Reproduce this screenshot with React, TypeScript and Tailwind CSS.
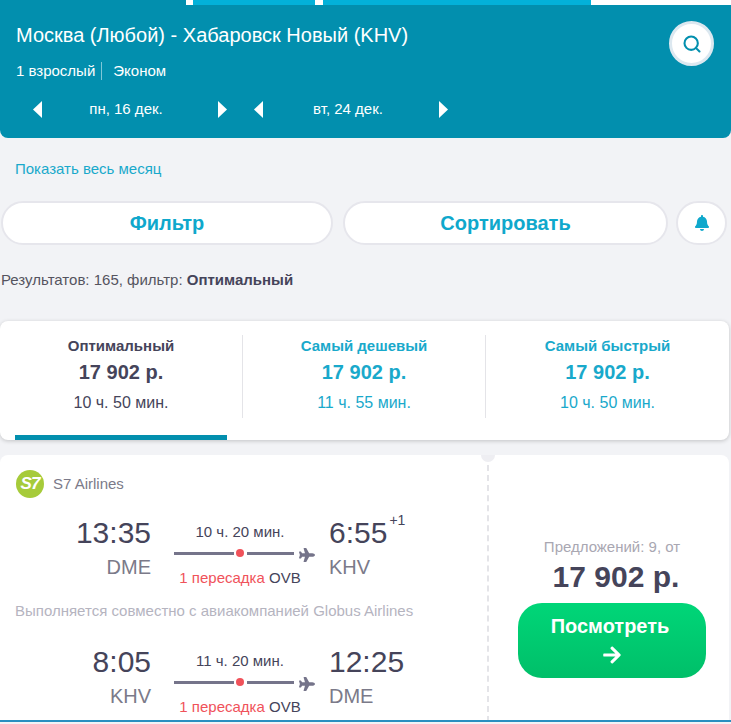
import { Search } from 'lucide-react';
import { FaArrowRight, FaBell, FaPlane } from 'react-icons/fa';

const Caret = ({ dir }: { dir: 'left' | 'right' }) => (
  <svg width="9" height="17" viewBox="0 0 9 17" className="text-white" fill="currentColor">
    {dir === 'left' ? <polygon points="9,0 9,17 0,8.5" /> : <polygon points="0,0 0,17 9,8.5" />}
  </svg>
);

const DatePicker = ({ label, shift }: { label: string; shift: string }) => (
  <div className="flex w-[194px] items-center justify-between text-[15px] text-white">
    <Caret dir="left" />
    <span className={shift}>{label}</span>
    <Caret dir="right" />
  </div>
);

const tabs = [
  { title: 'Оптимальный', price: '17 902 р.', time: '10 ч. 50 мин.', active: true },
  { title: 'Самый дешевый', price: '17 902 р.', time: '11 ч. 55 мин.', active: false },
  { title: 'Самый быстрый', price: '17 902 р.', time: '10 ч. 50 мин.', active: false },
];

const FlightRow = ({
  from,
  fromCode,
  to,
  toCode,
  duration,
  plus,
}: {
  from: string;
  fromCode: string;
  to: string;
  toCode: string;
  duration: string;
  plus?: string;
}) => (
  <div className="flex h-[83px]">
    <div className="w-[151px] shrink-0 text-right">
      <div className="text-[30px] leading-[36px] text-[#45445a]">{from}</div>
      <div className="mt-[4px] text-[20px] leading-[24px] text-[#7b7a89]">{fromCode}</div>
    </div>
    <div className="ml-[23px] w-[141px] shrink-0">
      <div className="mt-[8px] w-[132px] text-center text-[15px] leading-[18px] text-[#45445a]">{duration}</div>
      <div className="mt-[3px] flex h-[18px] items-center">
        <div className="relative h-[3px] w-[120px] bg-[#75748a]">
          <div className="absolute left-[60px] top-[-3px] h-[9px] w-[13px] bg-white" />
          <div className="absolute left-[62px] top-[-2.5px] h-[8px] w-[8px] rounded-full bg-[#f0525a]" />
        </div>
        <FaPlane className="ml-[5px] mt-[3px] text-[16px] text-[#75748a]" />
      </div>
      <div className="mt-[7px] w-[132px] whitespace-nowrap text-center text-[15px] leading-[18px] text-[#45445a]">
        <span className="text-[#f0525a]">1 пересадка</span> OVB
      </div>
    </div>
    <div className="ml-[14px] shrink-0">
      <div className="text-[30px] leading-[36px] text-[#45445a]">
        {to}
        {plus && <sup className="top-[-18px] ml-[2px] text-sm">{plus}</sup>}
      </div>
      <div className="mt-[4px] text-[20px] leading-[24px] text-[#7b7a89]">{toCode}</div>
    </div>
  </div>
);

export default function App() {
  return (
    <div className="h-[724px] w-[731px] overflow-hidden bg-[#f2f3f6] font-['Liberation_Sans',Arial,sans-serif]">
      {/* Header */}
      <div className="h-[138px] rounded-b-lg bg-[#028fae]">
        <div className="flex h-[5px] bg-white">
          <div className="w-[186px] bg-[#028fae]" />
          <div className="ml-[7px] w-[122px] bg-[#03b1d9]" />
          <div className="ml-[8px] w-[268px] bg-[#03b1d9]" />
        </div>
        <div className="flex justify-between pl-[16px] pr-[17px]">
          <div>
            <h1 className="mt-[17px] text-[20px] leading-[26px] text-white">Москва (Любой) - Хабаровск Новый (KHV)</h1>
            <div className="mt-[14px] flex items-center text-[15px] leading-[18px] text-white">
              <span className="border-r border-[#7fc7d7] pr-[6px]">1 взрослый</span>
              <span className="pl-[11px]">Эконом</span>
            </div>
            <div className="mt-[18px] flex gap-[27px] pl-[17px]">
              <DatePicker label="пн, 16 дек." shift="-ml-[8px]" />
              <DatePicker label="вт, 24 дек." shift="-ml-[6px]" />
            </div>
          </div>
          <button className="mt-[16px] flex h-[45px] w-[45px] items-center justify-center rounded-full border-[3px] border-[#dce8f0] bg-white">
            <Search size={20} strokeWidth={2.5} className="text-[#028fae]" />
          </button>
        </div>
      </div>

      <a className="mt-[22px] block pl-[15px] text-[15px] leading-[18px] text-[#19a9cb]">Показать весь месяц</a>

      {/* Buttons */}
      <div className="mt-[23px] flex pl-[1px]">
        <button className="h-[44px] w-[332px] rounded-full border-2 border-[#e6e6ec] bg-white text-[20px] font-bold text-[#0fa8cc]">
          Фильтр
        </button>
        <button className="ml-[10px] h-[44px] w-[325px] rounded-full border-2 border-[#e6e6ec] bg-white text-[20px] font-bold text-[#0fa8cc]">
          Сортировать
        </button>
        <button className="ml-[8px] flex h-[44px] w-[51px] items-center justify-center rounded-full border-2 border-[#e6e6ec] bg-white">
          <FaBell className="text-[16px] text-[#0fa8cc]" />
        </button>
      </div>

      <p className="mt-[26px] pl-[1px] text-[15px] leading-[18px] text-[#55545f]">
        Результатов: 165, фильтр: <b className="text-[#45445a]">Оптимальный</b>
      </p>

      {/* Tabs */}
      <div className="relative mt-[32px] grid h-[119px] w-[729px] grid-cols-[242px_243px_244px] rounded-lg bg-white pt-[14px] shadow-[0_1px_4px_rgba(0,0,0,0.2)]">
        {tabs.map((tab, i) => (
          <div
            key={tab.title}
            className={`h-[83px] text-center ${i > 0 ? 'border-l border-[#e4e4e8]' : ''} ${tab.active ? 'text-[#45445a]' : 'text-[#19a9cb]'}`}
          >
            <div className="mt-[2px] text-[15px] font-bold leading-[18px]">{tab.title}</div>
            <div className="mt-[5px] text-xl font-bold leading-[24px]">{tab.price}</div>
            <div className="mt-[10px] text-base leading-[18px]">{tab.time}</div>
          </div>
        ))}
        <div className="absolute bottom-0 left-[15px] h-[5px] w-[212px] bg-[#028fae]" />
      </div>

      {/* Flight card */}
      <div className="relative mt-[15px] flex h-[267px] w-[729px] rounded-t-lg bg-white">
        <div className="w-[489px] border-r-2 border-dashed border-[#e4e4e8] pl-[16px] pt-[15px]">
          <div className="flex items-center">
            <div className="flex h-[28px] w-[28px] items-center justify-center rounded-full bg-[#a6cb3a] text-[17px] font-bold italic tracking-tighter text-white">
              S7
            </div>
            <span className="ml-[9px] text-[15px] text-[#7b7a89]">S7 Airlines</span>
          </div>
          <div className="-ml-[16px] mt-[17px]">
            <FlightRow from="13:35" fromCode="DME" to="6:55" toCode="KHV" duration="10 ч. 20 мин." plus="+1" />
          </div>
          <p className="-ml-[1px] mt-[4px] text-[15px] leading-[18px] text-[#b5b4bf]">
            Выполняется совместно с авиакомпанией Globus Airlines
          </p>
          <div className="-ml-[16px] mt-[24px]">
            <FlightRow from="8:05" fromCode="KHV" to="12:25" toCode="DME" duration="11 ч. 20 мин." />
          </div>
        </div>
        <div className="absolute left-[481px] top-0 h-[7px] w-[14px] rounded-b-full bg-[#eeeef2]" />
        <div className="flex flex-1 flex-col items-center pl-[6px] pt-[83px]">
          <div className="text-[15px] leading-[18px] text-[#a9a7b2]">Предложений: 9, от</div>
          <div className="ml-[8px] mt-[4px] text-[30px] font-bold leading-[34px] text-[#45445a]">17 902 р.</div>
          <button className="mt-[9px] h-[75px] w-[188px] rounded-[24px] bg-gradient-to-b from-[#00d678] to-[#00bf69] pb-[3px] text-white">
            <div className="pr-[4px] text-[20px] font-bold leading-[26px]">Посмотреть</div>
            <FaArrowRight className="mx-auto mt-[6px] text-[20px]" />
          </button>
        </div>
        <div className="absolute bottom-0 left-0 h-[2px] w-[731px] bg-[#2a8fc0]" />
      </div>
    </div>
  );
}
